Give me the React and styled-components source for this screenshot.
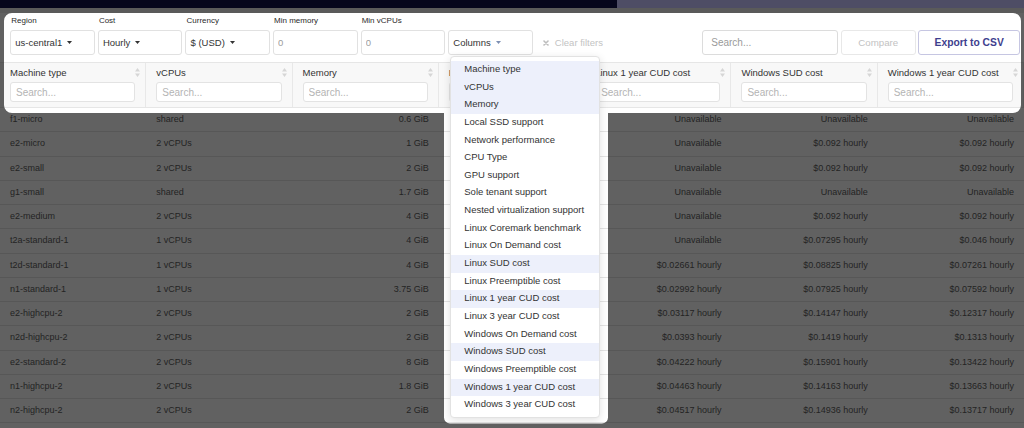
import React from 'react';
import styled, { createGlobalStyle } from 'styled-components';

const GlobalStyle = createGlobalStyle`
  html, body { margin: 0; padding: 0; }
  body {
    width: 1024px;
    height: 428px;
    overflow: hidden;
    background: #ededed;
    font-family: "Liberation Sans", Arial, Helvetica, sans-serif;
  }
  *, *::before, *::after { box-sizing: border-box; }
`;

const Page = styled.div`
  position: relative;
  display: flex;
  flex-direction: column;
  width: 1024px;
  height: 428px;
  overflow: hidden;
  background: #ededed;
`;

const TopBar = styled.div`
  display: flex;
  flex: none;
  height: 8px;
  margin-bottom: 5px;
`;

const TopSegment = styled.div`
  background: ${(p) => p.$color};
  width: ${(p) => (p.$width ? p.$width : 'auto')};
  flex: ${(p) => (p.$width ? 'none' : '1')};
`;

const FilterPanel = styled.div`
  display: flex;
  flex: none;
  align-items: flex-end;
  height: 50px;
  padding: 3px 4px 7px 10.3px;
  background: #fff;
  border-bottom: 1px solid #e6e6e6;
`;

const FieldGroup = styled.div`
  display: flex;
  align-items: flex-end;
  gap: 3px;
`;

const Field = styled.div`
  display: flex;
  flex-direction: column;
  gap: 4px;
  width: 84.6px;
`;

const Label = styled.div`
  height: 10px;
  padding-left: 1px;
  font-size: 8px;
  line-height: 10px;
  color: #2a2a2a;
  white-space: nowrap;
`;

const SelectBox = styled.div`
  display: flex;
  align-items: center;
  gap: 5px;
  width: 84.6px;
  height: 25px;
  padding: 0 4px;
  background: #fff;
  border: 1px solid #e1e1e1;
  border-radius: 3px;
  font-size: 9.5px;
  color: #333;
  white-space: nowrap;
`;

const NumberInput = styled.input`
  width: 100%;
  height: 25px;
  padding: 0 4px;
  background: #fff;
  border: 1px solid #e1e1e1;
  border-radius: 3px;
  font-family: inherit;
  font-size: 9.5px;
  color: #9c9c9c;
  outline: none;
`;

const ColumnsWrap = styled.div`
  position: relative;
`;

const ClearFilters = styled.div`
  display: flex;
  align-items: center;
  gap: 6px;
  height: 25px;
  margin-left: 10px;
  font-size: 9.5px;
  color: #c3c3c3;
  white-space: nowrap;
`;

const RightGroup = styled.div`
  display: flex;
  align-items: flex-end;
  gap: 2.7px;
  margin-left: auto;
`;

const SearchInput = styled.input`
  width: 136px;
  height: 25px;
  padding: 0 8px;
  background: #fff;
  border: 1px solid #dcdcdc;
  border-radius: 3px;
  font-family: inherit;
  font-size: 10px;
  color: #333;
  outline: none;
  &::placeholder { color: #9a9a9a; }
`;

const Button = styled.button`
  width: ${(p) => p.$width}px;
  height: 25px;
  padding: 0;
  background: #fff;
  border: 1px solid ${(p) => (p.$primary ? '#c6c6e2' : '#e8e8e8')};
  border-radius: 3px;
  font-family: inherit;
  font-size: ${(p) => (p.$primary ? '10.3px' : '9.7px')};
  font-weight: ${(p) => (p.$primary ? 700 : 400)};
  color: ${(p) => (p.$primary ? '#3e3e8e' : '#c2c2c2')};
`;

const HeaderRow = styled.div`
  display: grid;
  flex: none;
  grid-template-columns: repeat(7, 1fr);
  background: #f8f8f8;
  border-bottom: 1px solid #e6e6e6;
`;

const HeaderCell = styled.div`
  display: flex;
  flex-direction: column;
  padding: 0 10px 5px;
  border-right: 1px solid #e8e8e8;
  min-width: 0;
`;

const HeaderTitle = styled.div`
  display: flex;
  align-items: center;
  justify-content: space-between;
  height: 19px;
  margin-right: -5px;
  font-size: 9.5px;
  color: #333;
  white-space: nowrap;
`;

const HeaderSearch = styled.input`
  width: 100%;
  height: 20px;
  padding: 0 5px;
  background: #fff;
  border: 1px solid #e3e3e3;
  border-radius: 3px;
  font-family: inherit;
  font-size: 10px;
  outline: none;
  &::placeholder { color: #b4b4b4; }
`;

const Body = styled.div`
  flex: 1;
  background: #fff;
`;

const Row = styled.div`
  display: grid;
  grid-template-columns: repeat(7, 1fr);
  height: 24.25px;
  border-bottom: 1px solid #e4e4e4;
  background: #fff;
`;

const Cell = styled.div`
  padding: 0 10px;
  font-size: 9px;
  line-height: 23.25px;
  color: #5e5e5e;
  text-align: ${(p) => (p.$right ? 'right' : 'left')};
  white-space: nowrap;
  overflow: hidden;
`;

const Menu = styled.div`
  position: absolute;
  top: calc(100% + 1px);
  left: 2px;
  z-index: 5;
  width: 150px;
  padding: 4px 0 3px;
  background: #fff;
  border: 1px solid #e2e2e2;
  border-radius: 4px;
  box-shadow: 0 2px 8px rgba(0, 0, 0, 0.12);
`;

const MenuItem = styled.div`
  height: 17.65px;
  padding-left: 13px;
  font-size: 9.5px;
  line-height: 15.5px;
  color: #333;
  white-space: nowrap;
  background: ${(p) => (p.$selected ? '#edf0fb' : '#fff')};
`;

const Spotlight = styled.div`
  position: absolute;
  inset: 0;
  z-index: 10;
  pointer-events: none;
  background: rgba(0, 0, 0, 0.62);
  clip-path: path(evenodd, "M0 8H1024V428H0Z M12 13H1013A8 8 0 0 1 1021 21V105A8 8 0 0 1 1013 113H608V417.5A6 6 0 0 1 602 423.5H450A6 6 0 0 1 444 417.5V113H12A8 8 0 0 1 4 105V21A8 8 0 0 1 12 13Z");
`;

const Caret = ({ color = '#333' }) => (
  <svg width="5" height="3" viewBox="0 0 5 3" aria-hidden="true">
    <path d="M0 0H5L2.5 3Z" fill={color} />
  </svg>
);

const SortIcon = () => (
  <svg width="5" height="9" viewBox="0 0 5 9" aria-hidden="true">
    <path d="M2.5 0L5 3.5H0Z M2.5 9L0 5.5H5Z" fill="#d6d6d6" />
  </svg>
);

const CrossIcon = () => (
  <svg width="6" height="6" viewBox="0 0 6 6" aria-hidden="true">
    <path d="M1 1L5 5M5 1L1 5" stroke="#bdbdbd" strokeWidth="1.6" strokeLinecap="round" />
  </svg>
);

const columns = [
  'Machine type',
  'vCPUs',
  'Memory',
  'Linux SUD cost',
  'Linux 1 year CUD cost',
  'Windows SUD cost',
  'Windows 1 year CUD cost',
];

const menuItems = [
  ['Machine type', true],
  ['vCPUs', true],
  ['Memory', true],
  ['Local SSD support', false],
  ['Network performance', false],
  ['CPU Type', false],
  ['GPU support', false],
  ['Sole tenant support', false],
  ['Nested virtualization support', false],
  ['Linux Coremark benchmark', false],
  ['Linux On Demand cost', false],
  ['Linux SUD cost', true],
  ['Linux Preemptible cost', false],
  ['Linux 1 year CUD cost', true],
  ['Linux 3 year CUD cost', false],
  ['Windows On Demand cost', false],
  ['Windows SUD cost', true],
  ['Windows Preemptible cost', false],
  ['Windows 1 year CUD cost', true],
  ['Windows 3 year CUD cost', false],
];

// The Linux SUD cost column lies under the open menu, so its cells are left empty.
const rows = [
  ['f1-micro', 'shared', '0.6 GiB', '', 'Unavailable', 'Unavailable', 'Unavailable'],
  ['e2-micro', '2 vCPUs', '1 GiB', '', 'Unavailable', '$0.092 hourly', '$0.092 hourly'],
  ['e2-small', '2 vCPUs', '2 GiB', '', 'Unavailable', '$0.092 hourly', '$0.092 hourly'],
  ['g1-small', 'shared', '1.7 GiB', '', 'Unavailable', 'Unavailable', 'Unavailable'],
  ['e2-medium', '2 vCPUs', '4 GiB', '', 'Unavailable', '$0.092 hourly', '$0.092 hourly'],
  ['t2a-standard-1', '1 vCPUs', '4 GiB', '', 'Unavailable', '$0.07295 hourly', '$0.046 hourly'],
  ['t2d-standard-1', '1 vCPUs', '4 GiB', '', '$0.02661 hourly', '$0.08825 hourly', '$0.07261 hourly'],
  ['n1-standard-1', '1 vCPUs', '3.75 GiB', '', '$0.02992 hourly', '$0.07925 hourly', '$0.07592 hourly'],
  ['e2-highcpu-2', '2 vCPUs', '2 GiB', '', '$0.03117 hourly', '$0.14147 hourly', '$0.12317 hourly'],
  ['n2d-highcpu-2', '2 vCPUs', '2 GiB', '', '$0.0393 hourly', '$0.1419 hourly', '$0.1313 hourly'],
  ['e2-standard-2', '2 vCPUs', '8 GiB', '', '$0.04222 hourly', '$0.15901 hourly', '$0.13422 hourly'],
  ['n1-highcpu-2', '2 vCPUs', '1.8 GiB', '', '$0.04463 hourly', '$0.14163 hourly', '$0.13663 hourly'],
  ['n2-highcpu-2', '2 vCPUs', '2 GiB', '', '$0.04517 hourly', '$0.14936 hourly', '$0.13717 hourly'],
];

export default function App() {
  return (
    <>
      <GlobalStyle />
      <Page>
        <TopBar>
          <TopSegment $color="#06061c" $width="617px" />
          <TopSegment $color="#4e4d65" />
        </TopBar>

        <FilterPanel>
          <FieldGroup>
            <Field>
              <Label>Region</Label>
              <SelectBox>us-central1 <Caret /></SelectBox>
            </Field>
            <Field>
              <Label>Cost</Label>
              <SelectBox>Hourly <Caret /></SelectBox>
            </Field>
            <Field>
              <Label>Currency</Label>
              <SelectBox>$ (USD) <Caret /></SelectBox>
            </Field>
            <Field>
              <Label>Min memory</Label>
              <NumberInput defaultValue="0" />
            </Field>
            <Field>
              <Label>Min vCPUs</Label>
              <NumberInput defaultValue="0" />
            </Field>
            <ColumnsWrap>
              <SelectBox>Columns <Caret color="#7d8fb3" /></SelectBox>
              <Menu>
                {menuItems.map(([name, selected]) => (
                  <MenuItem key={name} $selected={selected}>{name}</MenuItem>
                ))}
              </Menu>
            </ColumnsWrap>
          </FieldGroup>
          <ClearFilters><CrossIcon /> Clear filters</ClearFilters>
          <RightGroup>
            <SearchInput placeholder="Search..." />
            <Button $width={74.7}>Compare</Button>
            <Button $width={101.7} $primary>Export to CSV</Button>
          </RightGroup>
        </FilterPanel>

        <HeaderRow>
          {columns.map((c) => (
            <HeaderCell key={c}>
              <HeaderTitle>
                <span>{c}</span>
                <SortIcon />
              </HeaderTitle>
              <HeaderSearch placeholder="Search..." />
            </HeaderCell>
          ))}
        </HeaderRow>

        <Body>
          {rows.map((r) => (
            <Row key={r[0]}>
              {r.map((v, i) => (
                <Cell key={i} $right={i >= 2}>{v}</Cell>
              ))}
            </Row>
          ))}
        </Body>

        <Spotlight />
      </Page>
    </>
  );
}
